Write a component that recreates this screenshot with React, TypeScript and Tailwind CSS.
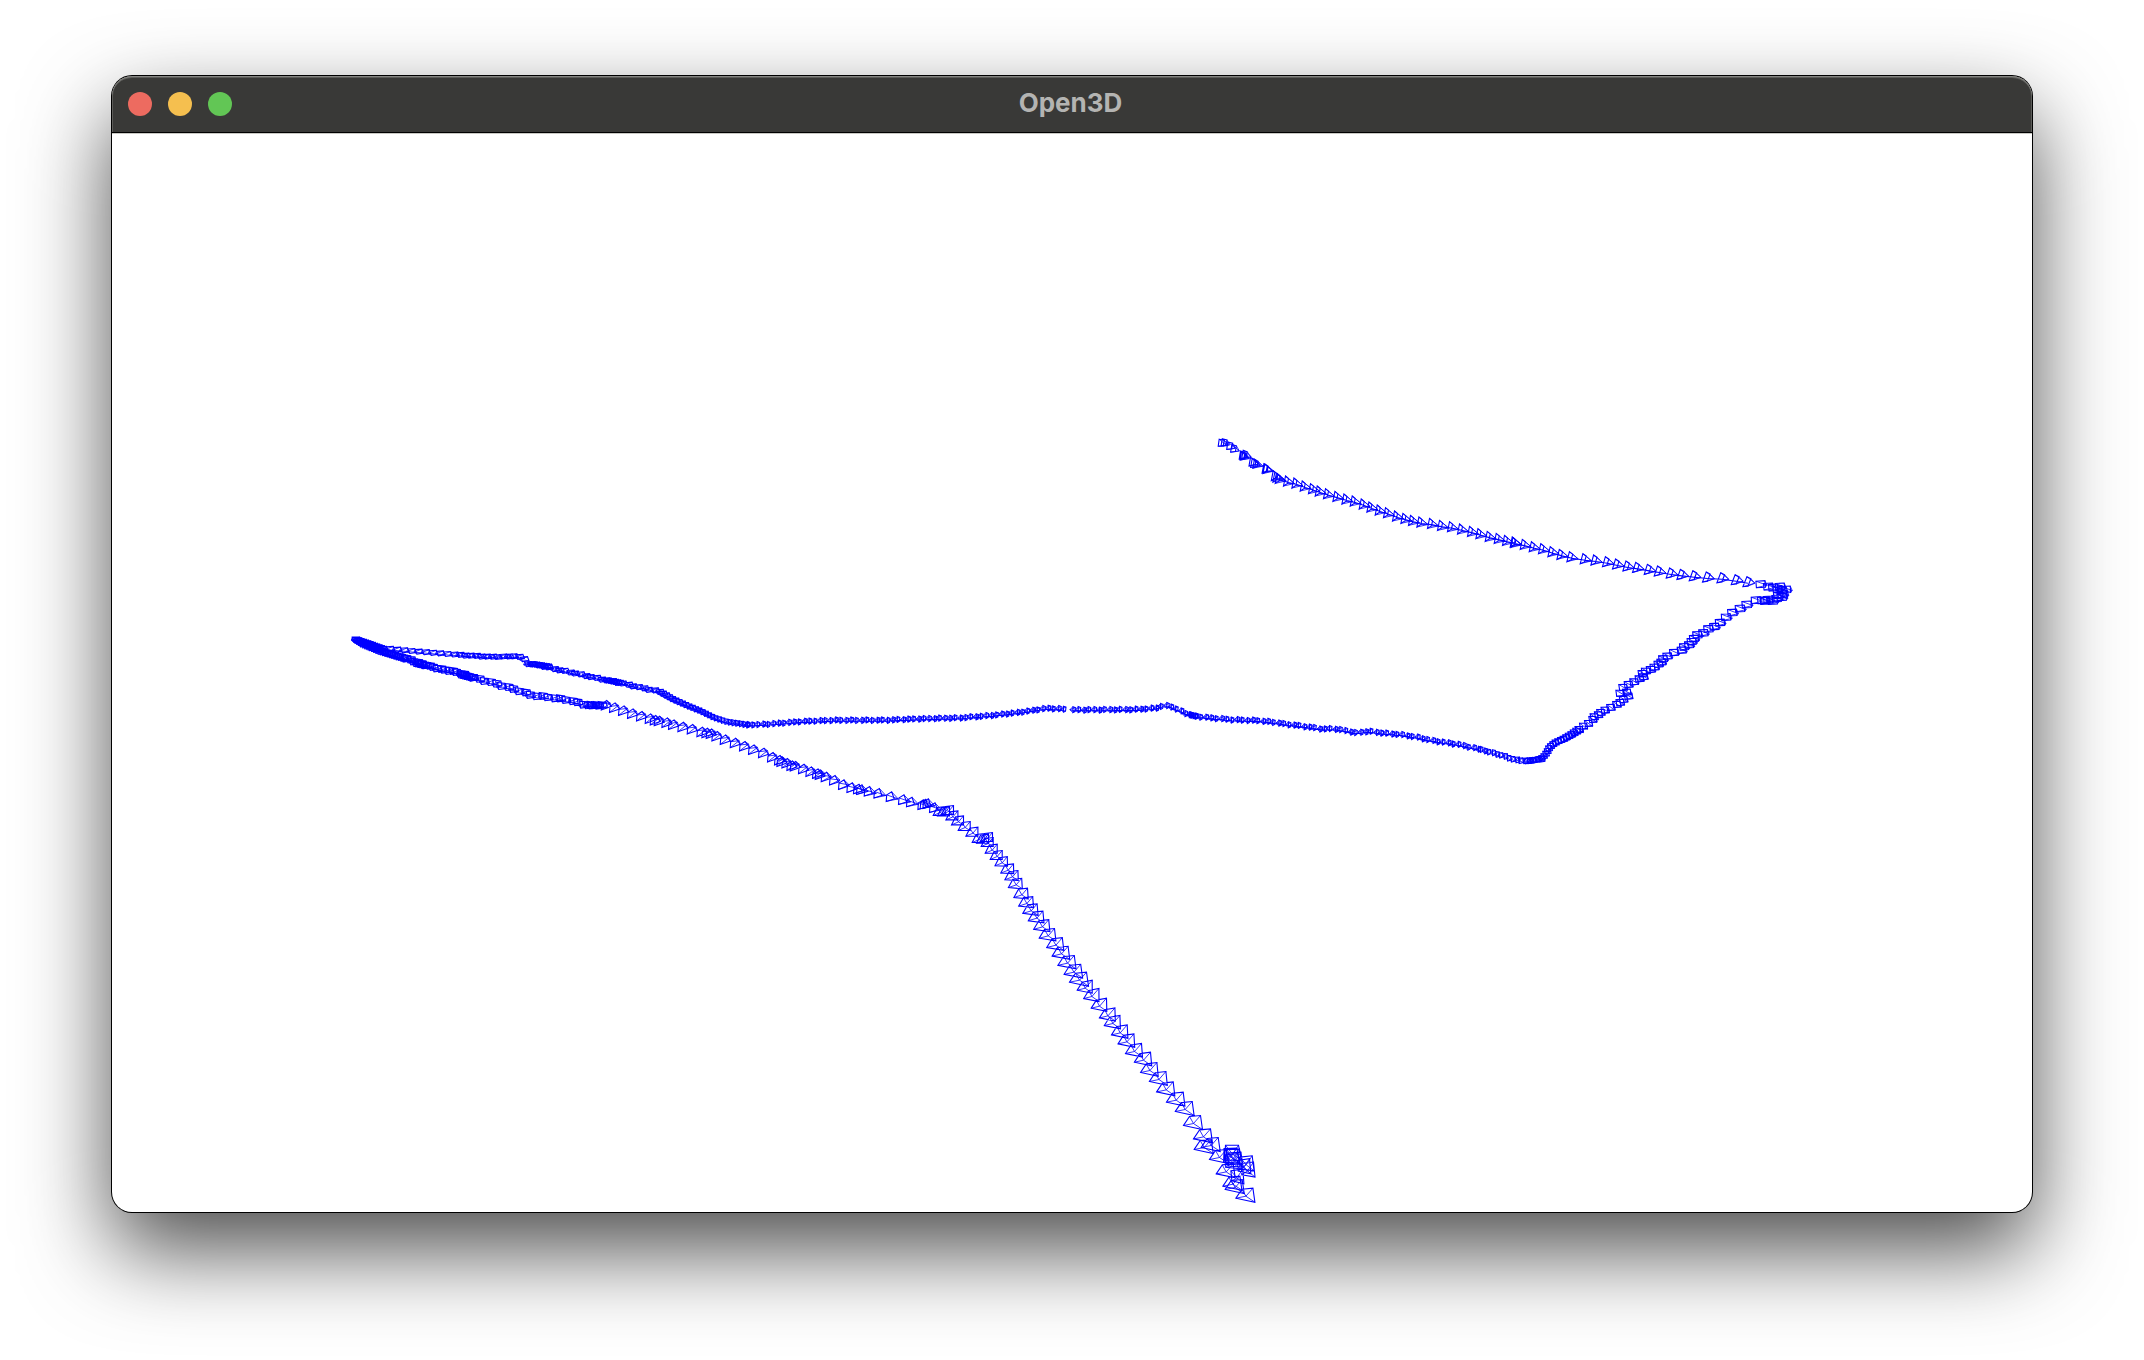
type Pt = [number, number];
// Frustum outline: TL, TR, BR, BL corners followed by the apex, relative to the camera centre.
type Shape = number[];

interface Run {
  origin: Pt;
  pts: number[];
  from: Shape;
  to: Shape;
  step?: number;
  line?: boolean;
  jitter?: number;
}

const BIG: Shape = [-4, -7, 7, -8, 9, 6, -10, 2, 0, 0];
const MID: Shape = [-3, -5, 5, -6, 5, 3, -7, 3, 0, 0];
const ARC: Shape = [-4.5, -1.5, 0.5, -5, 5, 1, -5, 4.5, 4, -2.5];
const ARCR: Shape = [-4.5, -2, 0.5, -5, 3, 2, -5, 4.5, 7, 2];
const PAR: Shape = [-4, -3.5, 4, -2.5, 5, 2.5, -3, 3.5, -5, 1];
const OVAL: Shape = [-4, -2, 3, -2.5, 4.5, 1.5, -2, 2.5, -5, 0.5];
const LEFT: Shape = [0, -3, 2.5, -2, 2, 2, 0, 3, -3, 0];
const SQS: Shape = [-3, -2, 2, -3, 3, 2, -2, 3, 0, 0];
const SQ: Shape = [-4, -3, 3, -3, 4, 2, -3, 3, 4, 3];
const SQL: Shape = [-5, -3, 4, -3.5, 4.5, 3, -4.5, 3.5, 6, 1];
const TRI: Shape = [-3, -5.5, 0, -3, -1, 2, -5, 4.5, 6, 2];
const TRIL: Shape = [-1, -5.5, 3, -3.5, 0, 4, -5, 4.5, 7, 1];
const TINY: Shape = [-3, -4, 2, -3, 1, 3, -4, 3, 4, 2];

const RUNS: Run[] = [
  { origin: [1200, 420], from: TINY, to: TRI, pts: [66, 69, 75, 68, 92, 78, 104, 86, 130, 106, 133, 109, 138, 104, 160, 126, 165, 130, 172, 132, 200, 146, 203, 147, 228, 168, 233, 172] },
  { origin: [1200, 420], from: TRI, to: TRI, line: true, pts: [240, 176, 265, 184, 290, 190, 315, 199, 340, 207, 360, 214, 385, 222, 413, 230, 440, 238, 465, 244, 492, 253, 515, 262, 540, 271, 565, 279, 592, 289, 617, 296, 640, 302, 665, 307, 697, 311, 727, 317, 757, 321, 787, 328, 817, 335, 842, 342, 870, 350, 897, 356, 922, 362, 945, 367] },
  { origin: [1500, 510], from: TRI, to: TRIL, line: true, pts: [47, 98, 75, 104, 102, 111, 130, 117, 158, 126, 185, 134, 215, 141, 255, 147, 287, 151, 322, 156, 352, 163, 383, 169, 412, 173, 447, 179, 477, 184, 513, 190, 545, 194, 582, 198, 622, 202, 665, 204, 708, 210, 743, 216] },
  { origin: [1500, 510], from: SQL, to: SQL, pts: [782, 222, 805, 229, 820, 232, 833, 237, 840, 229, 845, 240, 858, 238, 848, 252, 835, 255, 845, 261, 830, 265, 818, 272, 805, 268, 795, 272, 787, 270, 768, 270] },
  { origin: [1500, 510], from: SQL, to: SQ, pts: [740, 283, 720, 295, 697, 307, 678, 321, 660, 337, 643, 349, 625, 356, 610, 368, 592, 374, 582, 385, 575, 394, 567, 404, 552, 410, 545, 420, 522, 427, 502, 438, 489, 446, 484, 456, 475, 462, 463, 471, 452, 478, 437, 483, 427, 490, 430, 500, 418, 506, 402, 515, 385, 523, 369, 532, 360, 549, 380, 546, 385, 558, 370, 568, 360, 577, 350, 583, 332, 592, 315, 600, 302, 607, 295, 614, 282, 620, 278, 628, 265, 640, 250, 648, 237, 658] },
  { origin: [1500, 510], from: SQ, to: SQS, step: 3, pts: [237, 658, 215, 673, 190, 687, 165, 698, 148, 712, 140, 728, 128, 742, 110, 749, 78, 752] },
  { origin: [1150, 690], from: SQS, to: LEFT, step: 4.2, jitter: 0.5, pts: [1175, 207, 1128, 212, 1090, 208, 1065, 199, 1035, 190, 985, 177] },
  { origin: [1150, 690], from: LEFT, to: LEFT, step: 5.2, jitter: 0.6, line: true, pts: [985, 177, 925, 163, 845, 151, 800, 141, 750, 133, 700, 129, 655, 123, 615, 128, 580, 120, 545, 115, 520, 117, 450, 107, 400, 101, 370, 96, 320, 91, 250, 89, 180, 83, 135, 78, 115, 73, 85, 60, 60, 48, 40, 46, 15, 54, -50, 58, -240, 59] },
  { origin: [1150, 690], from: LEFT, to: LEFT, step: 2, pts: [135, 78, 115, 73] },
  { origin: [700, 690], from: LEFT, to: LEFT, step: 5.2, jitter: 0.5, line: true, pts: [1090, 57, 1040, 54, 960, 66, 880, 75, 780, 83, 650, 86, 550, 90, 400, 90, 300, 94, 200, 102, 140, 104] },
  { origin: [700, 690], from: LEFT, to: OVAL, step: 3.6, pts: [140, 104, 110, 99, 80, 95, 40, 82, 0, 62, -30, 50, -80, 28, -120, 5] },
  { origin: [340, 620], from: OVAL, to: OVAL, step: 5.4, jitter: 0.6, pts: [960, 215, 900, 202, 830, 186, 760, 172, 700, 158, 650, 148, 600, 136, 550, 129] },
  { origin: [340, 620], from: OVAL, to: OVAL, step: 2.4, pts: [840, 188, 800, 180] },
  { origin: [340, 620], from: OVAL, to: OVAL, step: 5.4, jitter: 0.4, pts: [553, 117, 530, 107, 510, 109, 450, 110, 350, 104] },
  { origin: [340, 620], from: OVAL, to: OVAL, step: 2.4, pts: [625, 139, 600, 135, 570, 131] },
  { origin: [340, 620], from: OVAL, to: OVAL, step: 7.2, pts: [344, 103, 280, 98, 200, 91, 130, 84] },
  { origin: [340, 620], from: OVAL, to: PAR, step: 2.4, pts: [130, 86, 90, 72, 46, 57, 70, 72, 120, 92, 200, 115] },
  { origin: [340, 620], from: PAR, to: PAR, step: 4, jitter: 0.6, pts: [200, 115, 250, 132, 300, 146, 350, 155, 400, 172] },
  { origin: [340, 620], from: PAR, to: PAR, step: 2, pts: [230, 128, 260, 135] },
  { origin: [340, 620], from: PAR, to: PAR, step: 2, pts: [365, 163, 405, 173] },
  { origin: [340, 620], from: PAR, to: PAR, step: 6, jitter: 0.8, pts: [400, 172, 450, 185, 500, 200, 540, 212, 575, 225, 620, 230, 690, 240, 740, 255] },
  { origin: [340, 620], from: PAR, to: PAR, step: 2.2, jitter: 0.6, pts: [745, 255, 790, 255] },
  { origin: [340, 620], from: ARC, to: ARC, pts: [798, 256, 823, 263, 850, 272, 877, 281, 904, 289, 930, 296, 945, 301, 957, 303, 980, 308, 1000, 314, 1028, 321, 1056, 328] },
  { origin: [700, 690], from: ARC, to: ARC, pts: [5, 126, 20, 129, 33, 131, 50, 139, 75, 149, 105, 159, 133, 169, 160, 179, 190, 189, 217, 202, 238, 211, 245, 215, 260, 220, 275, 227, 285, 229, 310, 237] },
  { origin: [700, 690], from: ARC, to: ARCR, pts: [332, 245, 352, 251, 360, 254, 378, 261, 403, 271, 430, 284, 455, 293, 475, 297, 484, 299, 507, 304] },
  { origin: [700, 690], from: ARCR, to: ARCR, pts: [536, 310, 573, 320, 610, 329, 634, 336, 668, 344, 675, 342, 683, 341, 703, 353] },
  { origin: [900, 770], from: MID, to: MID, pts: [120, 127, 133, 128, 145, 124, 158, 140, 175, 155, 195, 172, 218, 189, 237, 208, 250, 210, 262, 205, 264, 220, 276, 240] },
  { origin: [900, 770], from: MID, to: BIG, pts: [291, 259, 306, 278, 324, 300, 337, 320, 348, 344, 365, 374, 380, 400, 393, 422, 410, 444, 427, 470, 444, 497, 467, 525, 484, 551, 502, 579, 521, 606, 538, 630] },
  { origin: [1060, 960], from: [-3, -6, 7, -8, 7, 5, -8, 2, 0, 0], to: BIG, pts: [75, 84, 95, 109, 118, 138, 143, 167, 158, 190, 180, 218, 200, 245, 223, 274, 250, 300, 269, 331, 296, 358, 318, 389, 348, 420, 375, 448, 400, 490] },
  { origin: [1060, 960], from: BIG, to: BIG, pts: [430, 530, 453, 556, 432, 562, 478, 592, 498, 635, 518, 672, 525, 682, 557, 708] },
  { origin: [1060, 960], from: [-7, -9, 6, -9, 9, 6, -8, 6, 0, 0], to: [-6, -6, 6, -8, 7, 7, -5, 4, 0, 1], pts: [517, 582, 520, 594, 512, 590, 524, 602, 516, 606, 558, 612, 562, 630, 550, 620, 530, 650] },
];

function centres({ origin, pts, step }: Run): Pt[] {
  const path: Pt[] = [];
  for (let i = 0; i < pts.length; i += 2) {
    path.push([origin[0] + pts[i] / 3 + 0.2, origin[1] + pts[i + 1] / 3 + 0.2]);
  }
  if (!step) return path;
  const out: Pt[] = [];
  let carry = 0;
  for (let i = 1; i < path.length; i++) {
    const [ax, ay] = path[i - 1];
    const [bx, by] = path[i];
    const len = Math.hypot(bx - ax, by - ay);
    let d = carry;
    for (; d < len; d += step) {
      out.push([ax + ((bx - ax) * d) / len, ay + ((by - ay) * d) / len]);
    }
    carry = d - len;
  }
  return out;
}

function runPaths(run: Run): { outline: string; rays: string } {
  const cs = centres(run);
  const amp = run.jitter ?? 0;
  let outline = "";
  let rays = "";
  cs.forEach(([cx, cy], i) => {
    const t = cs.length > 1 ? i / (cs.length - 1) : 0;
    const s = run.from.map((v, k) => v + (run.to[k] - v) * t);
    const jx = cx + Math.sin(i * 2.3) * amp;
    const jy = cy + Math.sin(i * 4.1) * amp * 0.6;
    const p = (k: number) => `${(jx + s[k * 2]).toFixed(1)} ${(jy + s[k * 2 + 1]).toFixed(1)}`;
    outline += `M${p(0)}L${p(1)}L${p(2)}L${p(3)}Z`;
    rays += `M${p(0)}L${p(4)}L${p(2)}M${p(1)}L${p(4)}L${p(3)}`;
  });
  if (run.line) {
    outline += "M" + cs.map(([x, y]) => `${x.toFixed(1)} ${(y + 1).toFixed(1)}`).join("L");
  }
  return { outline, rays };
}

function Trajectory() {
  return (
    <svg className="block h-full w-full" viewBox="112 132 1920 1080" fill="none" stroke="#0000ff">
      {RUNS.map((run, i) => {
        const { outline, rays } = runPaths(run);
        return (
          <g key={i}>
            <path d={outline} strokeWidth="1.1" />
            <path d={rays} strokeWidth="0.8" />
          </g>
        );
      })}
    </svg>
  );
}

function TitleBar() {
  return (
    <header className="relative grid h-[57px] shrink-0 grid-cols-3 items-center rounded-t-[20px] border-b border-black bg-[#393937] px-4 shadow-[0_1px_0_#c9c9c4,inset_0_1px_0_#858582,inset_0_2px_0_#5c5c59,inset_1px_0_0_#5c5c59,inset_-1px_0_0_#5c5c59]">
      <div className="flex gap-4">
        <span className="size-6 rounded-full bg-[#ed6b60]" />
        <span className="size-6 rounded-full bg-[#f5bf4f]" />
        <span className="size-6 rounded-full bg-[#62c655]" />
      </div>
      <h1 className="pr-[3px] pb-[2px] text-center font-['Inter',sans-serif] text-[26px] leading-none font-bold text-[#b4b4b2]">Open3D</h1>
    </header>
  );
}

export default function App() {
  return (
    <main className="flex h-[1360px] w-[2144px] justify-center overflow-hidden bg-white pt-[76px]">
      <section className="flex h-[1136px] w-[1920px] flex-col overflow-hidden rounded-[20px] bg-white shadow-[0_0_0_1px_#000,0_38px_88px_rgba(0,0,0,0.7)]">
        <TitleBar />
        <div className="-mt-px h-[1080px] shrink-0">
          <Trajectory />
        </div>
      </section>
    </main>
  );
}
